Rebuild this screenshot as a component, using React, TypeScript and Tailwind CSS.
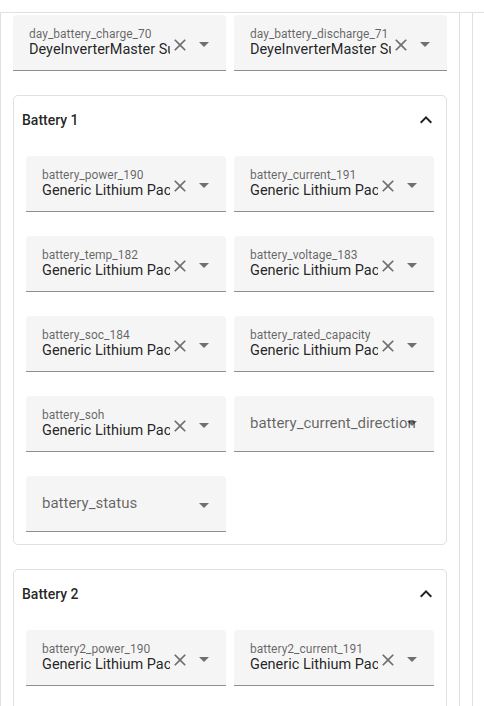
import React from 'react'

type FieldDef = { label: string; value?: string; raised?: boolean }

const topFields: FieldDef[] = [
  { label: 'day_battery_charge_70', value: 'DeyeInverterMaster Sunsynk' },
  { label: 'day_battery_discharge_71', value: 'DeyeInverterMaster Sunsynk' },
]

const pack = 'Generic Lithium Pack'

const battery1: FieldDef[] = [
  { label: 'battery_power_190', value: pack },
  { label: 'battery_current_191', value: pack },
  { label: 'battery_temp_182', value: pack },
  { label: 'battery_voltage_183', value: pack },
  { label: 'battery_soc_184', value: pack },
  { label: 'battery_rated_capacity', value: pack },
  { label: 'battery_soh', value: pack },
  { label: 'battery_current_direction', raised: true },
  { label: 'battery_status' },
]

const battery2: FieldDef[] = [
  { label: 'battery2_power_190', value: pack },
  { label: 'battery2_current_191', value: pack },
  { label: 'battery2_temp_182', value: pack },
  { label: 'battery2_voltage_183', value: pack },
]

function ClearIcon() {
  return (
    <svg viewBox="0 0 24 24" className="absolute right-[36px] top-[20px] h-5 w-5 fill-black/55">
      <path d="M19 6.41 17.59 5 12 10.59 6.41 5 5 6.41 10.59 12 5 17.59 6.41 19 12 13.41 17.59 19 19 17.59 13.41 12z" />
    </svg>
  )
}

function ArrowIcon({ raised }: { raised?: boolean }) {
  return (
    <svg
      viewBox="0 0 24 24"
      className={`pointer-events-none absolute right-[10px] h-6 w-6 fill-black/55 ${raised ? 'top-[15px]' : 'top-[17px]'}`}
    >
      <path d="M7 10l5 5 5-5z" />
    </svg>
  )
}

function SelectField({ label, value, raised }: FieldDef) {
  return (
    <div className="relative h-14 rounded-t bg-[#f5f5f5] border-b border-[#8f8f8f]">
      {value ? (
        <>
          <div className="flex flex-col pl-4 pr-14 pt-[12px]">
            <span className="whitespace-nowrap text-[12px] leading-[14px] text-black/60">{label}</span>
            <span className="overflow-hidden whitespace-nowrap text-[14.5px] leading-[18px] text-black/87">{value}</span>
          </div>
          <ClearIcon />
        </>
      ) : (
        <div className="flex h-full items-center pl-4 pb-[1px]">
          <span className="whitespace-nowrap text-[15px] text-black/60">{label}</span>
        </div>
      )}
      <ArrowIcon raised={raised} />
    </div>
  )
}

function BatteryCard({ title, fields }: { title: string; fields: FieldDef[] }) {
  return (
    <div className="rounded-[5px] border border-[#e0e0e0] bg-white">
      <div className="flex h-12 items-center justify-between pl-2 pr-2">
        <span className="text-[14px] font-medium text-black/87">{title}</span>
        <svg viewBox="0 0 24 24" className="h-6 w-6 fill-black/87">
          <path d="M12 8l-6 6 1.41 1.41L12 10.83l4.59 4.58L18 14z" />
        </svg>
      </div>
      <div className="grid grid-cols-2 gap-x-2 gap-y-6 px-3 pt-3 pb-3">
        {fields.map((f) => (
          <SelectField key={f.label} {...f} />
        ))}
      </div>
    </div>
  )
}

export default function App() {
  return (
    <div className="h-screen overflow-hidden bg-white pt-3 font-['Roboto',sans-serif]">
      <div className="flex h-full border-t border-[#e0e0e0]">
        <div className="w-[460px] shrink-0 border-l border-r border-[#e0e0e0] pl-3 pr-3 pt-[2px]">
          <div className="flex flex-col gap-6">
            <div className="grid grid-cols-2 gap-2">
              {topFields.map((f) => (
                <SelectField key={f.label} {...f} />
              ))}
            </div>
            <BatteryCard title="Battery 1" fields={battery1} />
            <BatteryCard title="Battery 2" fields={battery2} />
          </div>
        </div>
        <div className="w-[13px] shrink-0 border-r border-[#e0e0e0]" />
      </div>
    </div>
  )
}
